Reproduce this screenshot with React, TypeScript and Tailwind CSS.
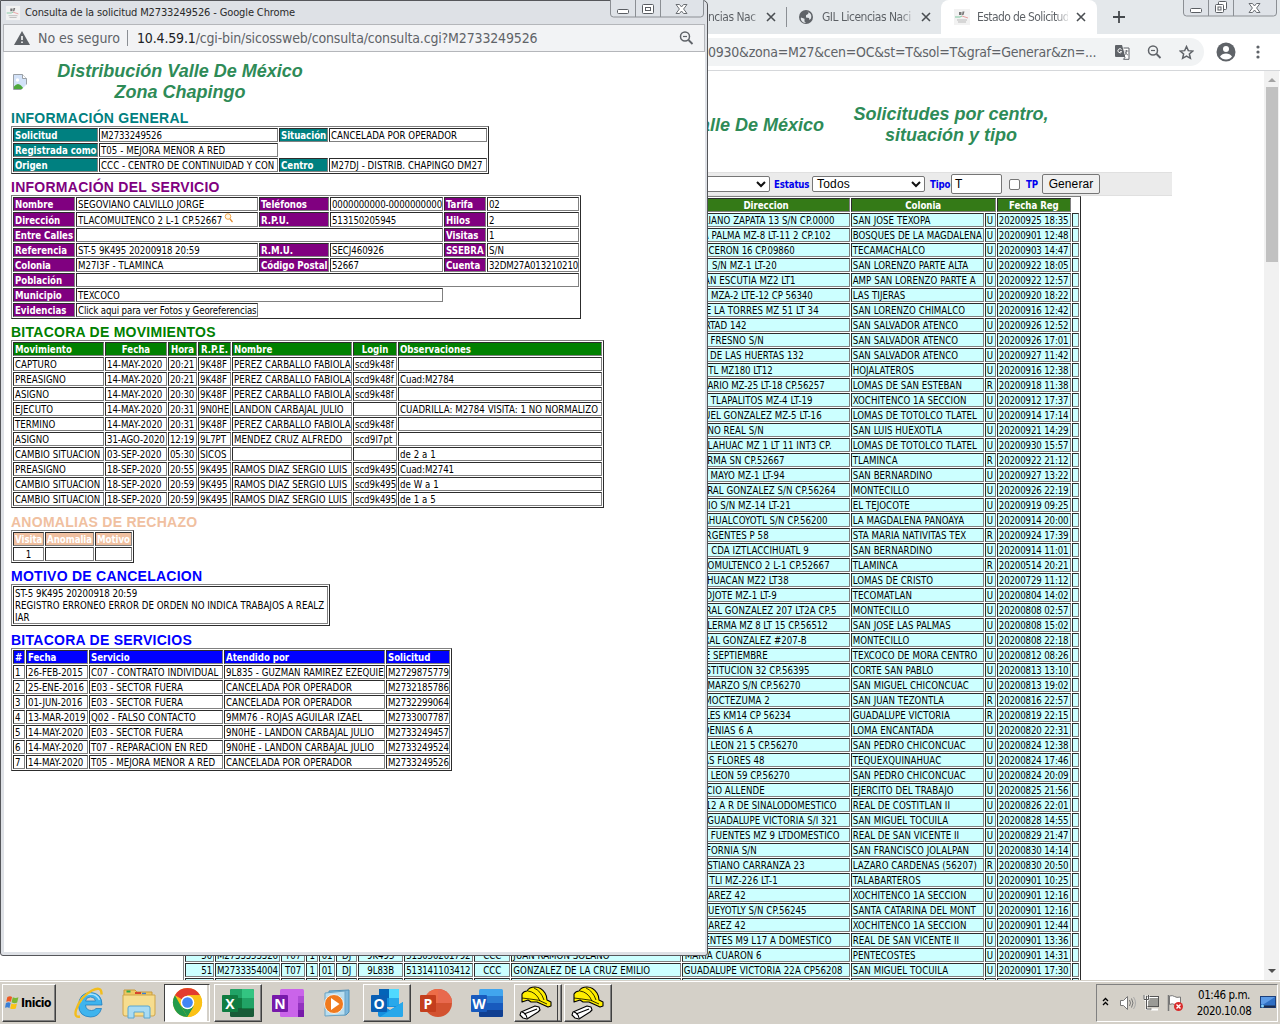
import React from 'react';

type Cell = {
  t?: React.ReactNode;
  head?: boolean;
  span?: number;
  center?: boolean;
  blank?: boolean;
};

const TAHOMA = "[font-family:'DejaVu_Sans_Condensed','Noto_Sans',sans-serif]";
const CELL =
  'border border-t-[#2c2c2c] border-l-[#2c2c2c] border-r-[#808080] border-b-[#808080] p-0 px-px whitespace-nowrap overflow-hidden align-middle';
const TABLE =
  'table-fixed border-separate border-spacing-px border border-t-[#808080] border-l-[#808080] border-r-[#2c2c2c] border-b-[#2c2c2c] text-[9.6px] leading-[12px] text-black bg-white';

function trackingFor(t: React.ReactNode): string {
  if (typeof t !== 'string' || t.length === 0) return 'tracking-[0.05px]';
  const digits = (t.match(/[0-9:.]/g) ?? []).length / t.length;
  if (digits > 0.8) return 'tracking-[-0.14px]';
  if (digits > 0.35) return 'tracking-[-0.06px]';
  return 'tracking-[0.05px]';
}

function Txt({ children, head = false }: { children?: React.ReactNode; head?: boolean }) {
  return <div className={`-mb-px pt-px ${head ? 'tracking-[-0.03px]' : trackingFor(children)}`}>{children}</div>;
}

function h(t: string, center = false): Cell {
  return { t, head: true, center };
}
function v(t: React.ReactNode = '', span = 1, center = false): Cell {
  return { t, span, center };
}

function DataTable({
  width,
  cols,
  rows,
  headClass,
}: {
  width: string;
  cols: string[];
  rows: Cell[][];
  headClass: string;
}) {
  return (
    <table className={`${TABLE} ${width}`}>
      <colgroup>
        {cols.map((c, i) => (
          <col key={i} className={c} />
        ))}
      </colgroup>
      <tbody>
        {rows.map((r, i) => (
          <tr key={i}>
            {r.map((c, j) =>
              c.blank ? (
                <td key={j} colSpan={c.span} className="h-[14px] p-0" />
              ) : (
                <td
                  key={j}
                  colSpan={c.span}
                  className={`${CELL} h-[14px] ${c.center ? 'text-center' : 'text-left'} ${
                    c.head ? `font-bold text-white ${headClass}` : ''
                  }`}
                >
                  {c.t ? <Txt head={c.head}>{c.t}</Txt> : null}
                </td>
              )
            )}
          </tr>
        ))}
      </tbody>
    </table>
  );
}

function Title({ children, className }: { children: string; className: string }) {
  return (
    <h2
      className={`h-[21px] pt-[5px] font-['Liberation_Sans'] text-[14px] leading-[16px] font-bold tracking-[0.260px] whitespace-nowrap ${className}`}
    >
      {children}
    </h2>
  );
}

const searchMini = (
  <svg className="inline-block" width="9" height="11" viewBox="0 0 9 11">
    <circle cx="4" cy="3.5" r="2.8" fill="#fff6e6" stroke="#f2a64a" strokeWidth="1" />
    <path d="M6 6 8.5 9" stroke="#e08a2c" strokeWidth="1.2" />
  </svg>
);

const general: Cell[][] = [
  [h('Solicitud'), v('M2733249526'), h('Situación'), v('CANCELADA POR OPERADOR')],
  [h('Registrada como'), v('T05 - MEJORA MENOR A RED'), { blank: true, span: 2 }],
  [h('Origen'), v('CCC - CENTRO DE CONTINUIDAD Y CON'), h('Centro'), v('M27DJ - DISTRIB. CHAPINGO DM27')],
];

const servicio: Cell[][] = [
  [h('Nombre'), v('SEGOVIANO CALVILLO JORGE'), h('Teléfonos'), v('0000000000-0000000000'), h('Tarifa'), v('02')],
  [
    h('Dirección'),
    v(
      <span className="-mt-px flex h-[14px] items-start">
        <span className="pt-[2px]">TLACOMULTENCO 2 L-1 CP.52667</span>
        <span className="ml-[2px] flex">{searchMini}</span>
      </span>
    ),
    h('R.P.U.'),
    v('513150205945'),
    h('Hilos'),
    v('2'),
  ],
  [h('Entre Calles'), v('', 3), h('Visitas'), v('1')],
  [h('Referencia'), v('ST-5 9K495 20200918 20:59'), h('R.M.U.'), v('SECJ460926'), h('SSEBRA'), v('S/N')],
  [h('Colonia'), v('M27I3F - TLAMINCA'), h('Código Postal'), v('52667'), h('Cuenta'), v('32DM27A013210210')],
  [h('Población'), v('', 5)],
  [h('Municipio'), v('TEXCOCO', 3), { blank: true, span: 2 }],
  [
    h('Evidencias'),
    v(<span className="tracking-[-0.1px]">Click aqui para ver Fotos y Georeferencias</span>),
    { blank: true, span: 4 },
  ],
];

const movimientos = [
  ['CAPTURO', '14-MAY-2020', '20:21', '9K48F', 'PEREZ CARBALLO FABIOLA', 'scd9k48f', ''],
  ['PREASIGNO', '14-MAY-2020', '20:21', '9K48F', 'PEREZ CARBALLO FABIOLA', 'scd9k48f', 'Cuad:M2784'],
  ['ASIGNO', '14-MAY-2020', '20:30', '9K48F', 'PEREZ CARBALLO FABIOLA', 'scd9k48f', ''],
  ['EJECUTO', '14-MAY-2020', '20:31', '9N0HE', 'LANDON CARBAJAL JULIO', '', 'CUADRILLA: M2784 VISITA: 1 NO NORMALIZO'],
  ['TERMINO', '14-MAY-2020', '20:31', '9K48F', 'PEREZ CARBALLO FABIOLA', 'scd9k48f', ''],
  ['ASIGNO', '31-AGO-2020', '12:19', '9L7PT', 'MENDEZ CRUZ ALFREDO', 'scd9l7pt', ''],
  ['CAMBIO SITUACION', '03-SEP-2020', '05:30', 'SICOS', '', '', 'de 2 a 1'],
  ['PREASIGNO', '18-SEP-2020', '20:55', '9K495', 'RAMOS DIAZ SERGIO LUIS', 'scd9k495', 'Cuad:M2741'],
  ['CAMBIO SITUACION', '18-SEP-2020', '20:59', '9K495', 'RAMOS DIAZ SERGIO LUIS', 'scd9k495', 'de W a 1'],
  ['CAMBIO SITUACION', '18-SEP-2020', '20:59', '9K495', 'RAMOS DIAZ SERGIO LUIS', 'scd9k495', 'de 1 a 5'],
];

const servicios = [
  ['1', '26-FEB-2015', 'C07 - CONTRATO INDIVIDUAL', '9L835 - GUZMAN RAMIREZ EZEQUIE', 'M2729875779'],
  ['2', '25-ENE-2016', 'E03 - SECTOR FUERA', 'CANCELADA POR OPERADOR', 'M2732185786'],
  ['3', '01-JUN-2016', 'E03 - SECTOR FUERA', 'CANCELADA POR OPERADOR', 'M2732299064'],
  ['4', '13-MAR-2019', 'Q02 - FALSO CONTACTO', '9MM76 - ROJAS AGUILAR IZAEL', 'M2733007787'],
  ['5', '14-MAY-2020', 'E03 - SECTOR FUERA', '9N0HE - LANDON CARBAJAL JULIO', 'M2733249457'],
  ['6', '14-MAY-2020', 'T07 - REPARACION EN RED', '9N0HE - LANDON CARBAJAL JULIO', 'M2733249524'],
  ['7', '14-MAY-2020', 'T05 - MEJORA MENOR A RED', 'CANCELADA POR OPERADOR', 'M2733249526'],
];

/* address, distance from the cell's right edge, colonia, type, date */
const solicitudes: [string, number, string, string, string][] = [
  ['EMILIANO ZAPATA 13 S/N CP.0000', 13, 'SAN JOSE TEXOPA', 'U', '20200925 18:35'],
  ['LA PALMA MZ-8 LT-11 2 CP.102', 17, 'BOSQUES DE LA MAGDALENA', 'U', '20200901 12:48'],
  ['CERON 16 CP.09860', 53, 'TECAMACHALCO', 'U', '20200903 14:47'],
  ['S/N MZ-1 LT-20', 71, 'SAN LORENZO PARTE ALTA', 'U', '20200922 18:05'],
  ['JUAN ESCUTIA MZ2 LT1', 52, 'AMP SAN LORENZO PARTE A', 'U', '20200922 12:57'],
  ['MZA-2 LTE-12 CP 56340', 35, 'LAS TIJERAS', 'U', '20200920 18:22'],
  ['DE LA TORRES MZ 51 LT 34', 29, 'SAN LORENZO CHIMALCO', 'U', '20200916 12:42'],
  ['LIBERTAD 142', 101, 'SAN SALVADOR ATENCO', 'U', '20200926 12:52'],
  ['FRESNO S/N', 84, 'SAN SALVADOR ATENCO', 'U', '20200926 17:01'],
  ['DE LAS HUERTAS 132', 44, 'SAN SALVADOR ATENCO', 'U', '20200927 11:42'],
  ['TL MZ180 LT12', 75, 'HOJALATEROS', 'U', '20200916 12:38'],
  ['ROSARIO MZ-25 LT-18 CP.56257', 23, 'LOMAS DE SAN ESTEBAN', 'R', '20200918 11:38'],
  ['TLAPALITOS MZ-4 LT-19', 35, 'XOCHITENCO 1A SECCION', 'U', '20200912 17:37'],
  ['MIGUEL GONZALEZ MZ-5 LT-16', 26, 'LOMAS DE TOTOLCO TLATEL', 'U', '20200914 17:14'],
  ['CAMINO REAL S/N', 84, 'SAN LUIS HUEXOTLA', 'U', '20200921 14:29'],
  ['TLAHUAC MZ 1 LT 11 INT3 CP.', 16, 'LOMAS DE TOTOLCO TLATEL', 'U', '20200930 15:57'],
  ['REFORMA SN CP.52667', 63, 'TLAMINCA', 'R', '20200922 21:12'],
  ['MAYO MZ-1 LT-94', 63, 'SAN BERNARDINO', 'U', '20200927 13:22'],
  ['CORRAL GONZALEZ S/N CP.56264', 12, 'MONTECILLO', 'U', '20200926 22:19'],
  ['RIO S/N MZ-14 LT-21', 57, 'EL TEJOCOTE', 'U', '20200919 09:25'],
  ['AHUALCOYOTL S/N CP.56200', 20, 'LA MAGDALENA PANOAYA', 'U', '20200914 20:00'],
  ['INSURGENTES P 58', 79, 'STA MARIA NATIVITAS TEX', 'R', '20200924 17:39'],
  ['CDA IZTLACCIHUATL 9', 39, 'SAN BERNARDINO', 'U', '20200914 11:01'],
  ['TLACOMULTENCO 2 L-1 CP.52667', 18, 'TLAMINCA', 'R', '20200514 20:21'],
  ['TEOTIHUACAN MZ2 LT38', 59, 'LOMAS DE CRISTO', 'U', '20200729 11:12'],
  ['OJOTE MZ-1 LT-9', 71, 'TECOMATLAN', 'U', '20200804 14:02'],
  ['CORRAL GONZALEZ 207 LT2A CP.5', 11, 'MONTECILLO', 'U', '20200808 02:57'],
  ['LERMA MZ 8 LT 15 CP.56512', 20, 'SAN JOSE LAS PALMAS', 'U', '20200808 15:02'],
  ['CORRAL GONZALEZ #207-B', 41, 'MONTECILLO', 'U', '20200808 22:18'],
  ['DE SEPTIEMBRE', 80, 'TEXCOCO DE MORA CENTRO', 'U', '20200812 08:26'],
  ['CONSTITUCION 32 CP.56395', 38, 'CORTE SAN PABLO', 'U', '20200813 13:10'],
  ['MARZO S/N CP.56270', 47, 'SAN MIGUEL CHICONCUAC', 'U', '20200813 19:02'],
  ['MOCTEZUMA 2', 78, 'SAN JUAN TEZONTLA', 'R', '20200816 22:57'],
  ['LES KM14 CP 56234', 57, 'GUADALUPE VICTORIA', 'R', '20200819 22:15'],
  ['GARDENIAS 6 A', 95, 'LOMA ENCANTADA', 'U', '20200820 22:31'],
  ['LEON 21 5 CP.56270', 50, 'SAN PEDRO CHICONCUAC', 'U', '20200824 12:38'],
  ['LAS FLORES 48', 83, 'TEQUEXQUINAHUAC', 'U', '20200824 17:46'],
  ['LEON 59 CP.56270', 58, 'SAN PEDRO CHICONCUAC', 'U', '20200824 20:09'],
  ['IGNACIO ALLENDE', 83, 'EJERCITO DEL TRABAJO', 'U', '20200825 21:56'],
  ['12 A R DE SINALODOMESTICO', 11, 'REAL DE COSTITLAN II', 'U', '20200826 22:01'],
  ['GUADALUPE VICTORIA S/I 321', 10, 'SAN MIGUEL TOCUILA', 'U', '20200828 14:55'],
  ['FUENTES MZ 9 LTDOMESTICO', 8, 'REAL DE SAN VICENTE II', 'U', '20200829 21:47'],
  ['CALIFORNIA S/N', 91, 'SAN FRANCISCO JOLALPAN', 'U', '20200830 14:14'],
  ['VENUSTIANO CARRANZA 23', 43, 'LAZARO CARDENAS (56207)', 'R', '20200830 20:50'],
  ['TLI MZ-226 LT-1', 70, 'TALABARTEROS', 'U', '20200901 10:25'],
  ['JUAREZ 42', 102, 'XOCHITENCO 1A SECCION', 'U', '20200901 12:16'],
  ['HUEYOTLY S/N CP.56245', 41, 'SANTA CATARINA DEL MONT', 'U', '20200901 12:16'],
  ['JUAREZ 42', 102, 'XOCHITENCO 1A SECCION', 'U', '20200901 12:44'],
  ['FUENTES M9 L17 A DOMESTICO', 16, 'REAL DE SAN VICENTE II', 'U', '20200901 13:36'],
  ['MARIA CUARON 6', 86, 'PENTECOSTES', 'U', '20200901 14:31'],
  ['GUADALUPE VICTORIA 22A CP56208', 5, 'SAN MIGUEL TOCUILA', 'U', '20200901 17:30'],
  ['', 0, '', '', ''],
];

const leftCells: Record<number, string[]> = {
  49: ['50', 'M2733353326', 'T07', '1', '01', 'DJ', '9K495', '513050201792', 'CCC', 'JUAN RAMON SOLANO'],
  50: ['51', 'M2733354004', 'T07', '1', '01', 'DJ', '9L83B', '513141103412', 'CCC', 'GONZALEZ DE LA CRUZ EMILIO'],
};
const emptyLeft = ['', '', '', '', '', '', '', '', '', ''];
const leftAlign = [
  'text-right',
  'text-left',
  'text-center',
  'text-center',
  'text-center',
  'text-center',
  'text-center',
  'text-left',
  'text-center',
  'text-left',
];
const backCols = [
  'w-[29px]',
  'w-[65px]',
  'w-[24px]',
  'w-[12px]',
  'w-[16px]',
  'w-[21px]',
  'w-[45px]',
  'w-[69px]',
  'w-[36px]',
  'w-[170px]',
  'w-[167px]',
  'w-[133px]',
  'w-[11px]',
  'w-[74px]',
  'w-[7px]',
];

function BackTable() {
  const hd = `${CELL} h-[14px] bg-[#347a17] text-center font-bold text-white`;
  const bd = `${CELL} h-[14px] bg-[#ccffff]`;
  return (
    <table className={`${TABLE} ml-[183px] w-[898px]`}>
      <colgroup>
        {backCols.map((c, i) => (
          <col key={i} className={c} />
        ))}
      </colgroup>
      <tbody>
        <tr>
          <td className={hd} colSpan={10} />
          <td className={hd}>
            <Txt head>Direccion</Txt>
          </td>
          <td className={hd} colSpan={2}>
            <Txt head>Colonia</Txt>
          </td>
          <td className={hd}>
            <Txt head>Fecha Reg</Txt>
          </td>
          <td className="p-0" />
        </tr>
        {solicitudes.map((s, i) => (
          <tr key={i}>
            {(leftCells[i] ?? emptyLeft).map((t, j) => (
              <td key={j} className={`${bd} ${leftAlign[j]}`}>
                {t ? <Txt>{t}</Txt> : null}
              </td>
            ))}
            <td className={bd}>
              <div className="flex justify-end" style={{ paddingRight: s[1] }}>
                {s[0] ? <Txt>{s[0]}</Txt> : null}
              </div>
            </td>
            {[s[2], s[3], s[4], ''].map((t, j) => (
              <td key={j} className={bd}>
                {t ? <Txt>{t}</Txt> : null}
              </td>
            ))}
          </tr>
        ))}
      </tbody>
    </table>
  );
}

function WindowButtons({ restore = false }: { restore?: boolean }) {
  return (
    <svg width="94" height="18" viewBox="0 0 94 18" fill="none" stroke="#8b8f94">
      <path d="M.5 0v14q0 3 3 3h87q3 0 3-3V0M25.5 0v17M50.5 0v17" fill="#dfe3e8" />
      <rect x="7.5" y="9.500" width="11" height="4" rx="1" fill="#fff" stroke="#5a5e63" />
      {restore ? (
        <g fill="#fff" stroke="#5a5e63">
          <rect x="35.500" y="2.500" width="8" height="8" rx="1" />
          <rect x="32.500" y="5.500" width="8" height="8" rx="1" />
          <rect x="35" y="8" width="3" height="3" />
        </g>
      ) : (
        <g fill="#fff" stroke="#5a5e63">
          <rect x="32.500" y="4.500" width="11" height="9" rx="1" />
          <rect x="35.500" y="7.500" width="5" height="3" />
        </g>
      )}
      <path
        d="M66 4.500h3.500l2 2.500 2-2.500H77L73.600 9l3.400 4.500h-3.500l-2-2.500-2 2.500H66L69.400 9z"
        fill="#fff"
        stroke="#6a6e73"
      />
    </svg>
  );
}

function ZoomOut() {
  return (
    <svg width="16" height="16" viewBox="0 0 16 16" fill="none" stroke="#5f6368" strokeWidth="1.500">
      <circle cx="6" cy="6.500" r="4.500" />
      <path d="M4 6.500h4" strokeWidth="1.200" />
      <path d="M9.500 10l4 4" strokeWidth="1.800" />
    </svg>
  );
}

function CfeIcon() {
  return (
    <svg width="16" height="16" viewBox="0 0 16 16">
      <rect width="16" height="16" fill="#f2f2f2" />
      <path d="M5 3h2.500v3H5zM8.500 2.500l2 0-1 3.500h-1.500z" fill="#777" />
      <path d="M1 8h5l2-1" stroke="#7fc7a0" fill="none" />
      <path d="M8 7l6 2" stroke="#e8a0a0" />
      <path d="M3 11h10M4 13h8" stroke="#bbb" />
    </svg>
  );
}

function Close() {
  return (
    <svg width="10" height="10" viewBox="0 0 10 10" stroke="#4a4e52" strokeWidth="1.600">
      <path d="M1 1l8 8M9 1L1 9" />
    </svg>
  );
}

const TAB_LABEL =
  'shrink-0 bg-gradient-to-r from-[#5a5e63] from-85% to-[#5f636833] bg-clip-text whitespace-nowrap text-transparent';

function BackBrowser() {
  return (
    <div className="flex h-[980px] flex-col bg-white">
      <div className="flex h-[34px] shrink-0 items-center bg-[#e4e8eb] pl-[708px] text-[12px] tracking-[-0.5px] text-[#5f6368]">
        <span className={`w-[50px] ${TAB_LABEL}`}>ncias Nac</span>
        <span className="ml-[8px] shrink-0">
          <Close />
        </span>
        <span className="ml-[10px] h-[20px] w-px shrink-0 bg-[#8b8f94]" />
        <svg className="ml-[12px] shrink-0" width="14" height="14" viewBox="0 0 14 14">
          <circle cx="7" cy="7" r="7" fill="#5f6368" />
          <path d="M2 7.500l3.500 1.200v2.800l1.500 1.500C3 13 1.200 9.500 2 7.500zM6 1.500l4 .500-1 2-2 1.200v2.300l3 .500.500 2 1.500-1.500c1.500-4-1.500-7-6-7z" fill="#e4e8eb" />
        </svg>
        <span className={`ml-[9px] w-[91px] ${TAB_LABEL}`}>GIL Licencias Naci</span>
        <span className="ml-[8px] shrink-0">
          <Close />
        </span>
        <div className="ml-[10px] flex h-[34px] w-[156px] shrink-0 items-center rounded-t-[8px] bg-white pl-[13px]">
          <CfeIcon />
          <span className={`ml-[7px] w-[91px] tracking-[-0.6px] ${TAB_LABEL}`}>Estado de Solicitud</span>
          <span className="ml-[8px]">
            <Close />
          </span>
        </div>
        <svg className="ml-[16px] shrink-0" width="12" height="12" viewBox="0 0 12 12" stroke="#45494d" strokeWidth="1.800">
          <path d="M6 0v12M0 6h12" />
        </svg>
        <span className="-mt-px ml-[58px] shrink-0 self-start">
          <WindowButtons restore />
        </span>
      </div>
      <div className="flex h-[37px] shrink-0 items-center border-b border-[#d5d7da] bg-white">
        <div className="flex h-[28px] w-[1204px] items-center rounded-r-full bg-[#f1f3f4] pl-[708px]">
          <span className="w-[398px] text-[14px] tracking-[-0.240px] whitespace-nowrap text-[#5f6368]">
            0930&amp;zona=M27&amp;cen=OC&amp;st=T&amp;sol=T&amp;graf=Generar&amp;zn=...
          </span>
          <svg className="ml-[9px] shrink-0" width="15" height="15" viewBox="0 0 15 15">
            <path d="M0 1q0-1 1-1h6l3.500 12H1q-1 0-1-1z" fill="#5f6368" />
            <path d="M8.500 3H14v11.300H8.500l1.800-2.300" fill="#fff" stroke="#5f6368" />
            <path d="M6.500 4.500a2 2 0 1 0 .2 2.200H5" fill="none" stroke="#fff" />
            <path d="M9.500 6h4M11.500 5v1q0 3-1.800 4M10 7q1 2.500 3 3" fill="none" stroke="#5f6368" strokeWidth=".8" />
          </svg>
          <span className="ml-[17px] shrink-0">
            <ZoomOut />
          </span>
          <svg className="ml-[16px] shrink-0" width="15" height="15" viewBox="0 0 24 24" fill="none" stroke="#5f6368" strokeWidth="2.400">
            <path d="M12 2.500l2.900 6.500 7 .700-5.300 4.600 1.600 7-6.200-3.700-6.200 3.700 1.600-7L2.100 9.700l7-.700z" />
          </svg>
        </div>
        <svg className="ml-[12px]" width="20" height="20" viewBox="0 0 20 20">
          <circle cx="10" cy="10" r="9.500" fill="#5f6368" />
          <circle cx="10" cy="7" r="3" fill="#fff" />
          <path d="M4 14.500q2-3 6-3t6 3q-2 3-6 3t-6-3z" fill="#fff" />
        </svg>
        <svg className="ml-[20px]" width="4" height="14" viewBox="0 0 4 14" fill="#5f6368">
          <circle cx="2" cy="2" r="1.600" />
          <circle cx="2" cy="7" r="1.600" />
          <circle cx="2" cy="12" r="1.600" />
        </svg>
      </div>
      <div className="flex h-[909px] shrink-0">
        <div className="w-[1264px] overflow-hidden">
          <div className="flex h-[101px] items-center pt-[7px] font-['Liberation_Sans'] text-[18px] leading-[21px] font-bold text-[#2e8b57] italic">
            <div className="w-[825px] pr-px text-right whitespace-nowrap">Distribución Valle De México</div>
            <div className="w-[252px] text-center whitespace-nowrap">
              Solicitudes por centro,
              <br />
              situación y tipo
            </div>
          </div>
          <div className="flex h-[24px] w-[1172px] items-center border-t border-b border-[#e0e0e0] bg-[#ebebeb] text-[9.6px] font-bold tracking-[-0.150px] text-[#0000ee]">
            <div className="ml-[600px] flex h-[16px] w-[170px] shrink-0 items-center justify-end rounded-[2px] border border-[#767676] bg-white pr-[3px]">
              <Chevron />
            </div>
            <span className="ml-[3px] w-[39px] shrink-0 pt-[2px] pl-px">Estatus</span>
            <div className="flex h-[16px] w-[113px] shrink-0 items-center justify-between rounded-[2px] border border-[#767676] bg-white pr-[3px] pl-[4px] font-['Liberation_Sans'] text-[12px] font-normal tracking-[0.2px] text-black">
              Todos
              <Chevron />
            </div>
            <span className="ml-[5px] w-[21px] shrink-0 pt-[2px]">Tipo</span>
            <div className="flex h-[20px] w-[51px] shrink-0 items-center rounded-[2px] border border-[#767676] bg-white pl-[3px] font-['Liberation_Sans'] text-[12px] font-normal text-black">
              T
            </div>
            <span className="ml-[7px] h-[11px] w-[11px] shrink-0 rounded-[2px] border border-[#767676] bg-white" />
            <span className="ml-[6px] w-[16px] shrink-0 pt-[3px]">TP</span>
            <div className="flex h-[20px] w-[58px] shrink-0 items-center justify-center rounded-[2px] border border-[#767676] bg-[#efefef] font-['Liberation_Sans'] text-[12px] font-normal tracking-[0.1px] text-black">
              Generar
            </div>
          </div>
          <BackTable />
        </div>
        <div className="flex w-[15px] flex-col items-center justify-between bg-[#f1f1f1]">
          <div className="flex flex-col items-center">
            <svg className="mt-[6px]" width="8" height="5" viewBox="0 0 8 5">
              <path d="M0 5l4-4 4 4z" fill="#a3a3a3" />
            </svg>
            <div className="mt-[5px] h-[175px] w-[12px] bg-[#c1c1c1]" />
          </div>
          <svg className="mb-[6px]" width="8" height="5" viewBox="0 0 8 5">
            <path d="M0 0l4 4 4-4z" fill="#505050" />
          </svg>
        </div>
      </div>
    </div>
  );
}

function Chevron() {
  return (
    <svg width="10" height="7" viewBox="0 0 10 7" fill="none" stroke="#111" strokeWidth="2">
      <path d="M1 1l4 4 4-4" />
    </svg>
  );
}

function FrontWindow() {
  return (
    <div className="absolute top-0 left-0 flex h-[956px] w-[708px] flex-col rounded-tr-[5px] rounded-b-[3px] border border-[#55565a] bg-[#dee1e6] px-[2px] pb-[3px]">
      <div className="flex h-[23px] shrink-0 items-center pl-[2px] text-[11px] tracking-[-0.130px] text-[#2a2a2a]">
        <span className="scale-90">
          <CfeIcon />
        </span>
        <span className="ml-[4px] flex-1 pt-px whitespace-nowrap">Consulta de la solicitud M2733249526 - Google Chrome</span>
        <span className="mr-px -mt-px self-start">
          <WindowButtons />
        </span>
      </div>
      <div className="flex h-[28px] shrink-0 items-center border border-[#b4b6ba] bg-[#f2f3f5] pl-[10px] text-[14px] text-[#5f6368]">
        <svg width="16" height="14" viewBox="0 0 16 14">
          <path d="M8 0l8 14H0z" fill="#5f6368" />
          <path d="M7.200 5h1.600v4H7.200zM7.200 10.500h1.600V12H7.200z" fill="#fff" />
        </svg>
        <span className="ml-[8px] w-[82px] tracking-[-0.040px] whitespace-nowrap">No es seguro</span>
        <span className="ml-[7px] h-[16px] w-px bg-[#8b8f94]" />
        <span className="ml-[9px] flex-1 tracking-[-0.160px] whitespace-nowrap">
          <span className="text-[#202124]">10.4.59.1</span>/cgi-bin/sicossweb/consulta/consulta.cgi?M2733249526
        </span>
        <span className="mr-[9px]">
          <ZoomOut />
        </span>
      </div>
      <div className="ml-px flex-1 overflow-hidden bg-white pl-[7px]">
        <div className="flex h-[53px] items-center pt-[6px]">
          <svg className="ml-[2px] shrink-0" width="14" height="16" viewBox="0 0 14 16">
            <path d="M.5.500h9l4 4v11H.500z" fill="#d3e2f8" stroke="#9aa0a6" />
            <path d="M9.500.500v4h4" fill="#fff" stroke="#9aa0a6" />
            <path d="M1 15v-2.500q3.500-4.500 7-1L11 15z" fill="#4ea83c" />
            <circle cx="4.500" cy="6" r="1.700" fill="#fff" />
            <path d="M8 16l6-6v6z" fill="#fff" />
          </svg>
          <div className="ml-[30px] w-[246px] text-center font-['Liberation_Sans'] text-[18px] leading-[21px] font-bold whitespace-nowrap text-[#2e8b57] italic">
            Distribución Valle De México
            <br />
            Zona Chapingo
          </div>
        </div>
        <Title className="text-[#008080]">INFORMACIÓN GENERAL</Title>
        <DataTable
          width="w-[478px]"
          cols={['w-[85px]', 'w-[179px]', 'w-[49px]', 'w-[158px]']}
          rows={general}
          headClass="bg-[#008080]"
        />
        <Title className="text-[#800080]">INFORMACIÓN DEL SERVICIO</Title>
        <DataTable
          width="w-[570px]"
          cols={['w-[62px]', 'w-[182px]', 'w-[70px]', 'w-[113px]', 'w-[42px]', 'w-[92px]']}
          rows={servicio}
          headClass="bg-[#800080]"
        />
        <Title className="text-[#008000]">BITACORA DE MOVIMIENTOS</Title>
        <DataTable
          width="w-[593px]"
          cols={['w-[91px]', 'w-[62px]', 'w-[29px]', 'w-[33px]', 'w-[120px]', 'w-[44px]', 'w-[204px]']}
          rows={[
            [h('Movimiento'), h('Fecha', true), h('Hora', true), h('R.P.E.', true), h('Nombre'), h('Login', true), h('Observaciones')],
            ...movimientos.map((r) => r.map((t) => v(t))),
          ]}
          headClass="bg-[#008000]"
        />
        <Title className="mt-px text-[#f0c0a0]">ANOMALIAS DE RECHAZO</Title>
        <DataTable
          width="w-[123px]"
          cols={['w-[31px]', 'w-[49px]', 'w-[37px]']}
          rows={[
            [h('Visita'), h('Anomalia'), h('Motivo')],
            [v('1', 1, true), v(), v()],
          ]}
          headClass="bg-[#f0c0a0]"
        />
        <Title className="text-[#0000ff]">MOTIVO DE CANCELACION</Title>
        <table className={`${TABLE} w-[319px]`}>
          <tbody>
            <tr>
              <td className={`${CELL} h-[38px]`}>
                <Txt>
                  <span className="tracking-[-0.040px]">ST-5 9K495 20200918 20:59</span>
                  <br />
                  REGISTRO ERRONEO ERROR DE ORDEN NO INDICA TRABAJOS A REALZ
                  <br />
                  IAR
                </Txt>
              </td>
            </tr>
          </tbody>
        </table>
        <Title className="mt-px text-[#0000ff]">BITACORA DE SERVICIOS</Title>
        <DataTable
          width="w-[441px]"
          cols={['w-[12px]', 'w-[62px]', 'w-[134px]', 'w-[161px]', 'w-[64px]']}
          rows={[
            [h('#'), h('Fecha'), h('Servicio'), h('Atendido por'), h('Solicitud')],
            ...servicios.map((r) => r.map((t) => v(t))),
          ]}
          headClass="bg-[#0000ff]"
        />
      </div>
    </div>
  );
}

function LetterTile({ letter, fill }: { letter: string; fill: string }) {
  return (
    <>
      <rect x="0" y="7" width="16" height="17" rx="1" fill={fill} />
      <text x="8" y="20.500" textAnchor="middle" fontFamily="Open Sans" fontWeight="700" fontSize="14" fill="#fff">
        {letter}
      </text>
    </>
  );
}

function Helmet() {
  return (
    <svg width="34" height="34" viewBox="0 0 34 34" stroke="#000" strokeWidth="1.100" strokeLinejoin="round">
      <path d="M2 26l14-6 4 1 1 3-2 2-11 7-4-1-3-3z" fill="#fff" />
      <path d="M5 28l13-5M3 26q4 1 5 6" fill="none" />
      <path d="M3 16V8q2-3 5-3 2-4 8-4 6 0 10 6 2 3 2 7l4 2v4l-3 1-11-5-6 0-3-2z" fill="#ffee00" />
      <path d="M9 5q8 1 12 10M15 2q7 3 10 12M3 12l8 1q9 0 17 5" fill="none" strokeWidth=".8" />
    </svg>
  );
}

const RAISED = 'border border-t-white border-l-white border-r-[#404040] border-b-[#404040] shadow-[inset_-1px_-1px_0_#808080]';

function Taskbar() {
  return (
    <div className="flex h-[44px] items-center border-t border-[#d4d0c8] bg-[#d4d0c8] pl-[2px] shadow-[inset_0_1px_0_#fff]">
      <div className={`flex h-[38px] w-[54px] items-center pl-[2px] text-[12px] font-bold tracking-[-0.5px] text-black ${RAISED}`}>
        <svg className="shrink-0" width="15" height="15" viewBox="0 0 16 16">
          <path d="M2.500 2q3-1.500 5 0L6.300 7.300q-2-1.500-5 0z" fill="#ee5a24" />
          <path d="M8.300 2.500q3 1.500 6 0L13 8q-3 1.500-6-.300z" fill="#7ab733" />
          <path d="M1 8.500q3-1.500 5 0L4.700 14q-2-1.500-4.700-.300z" fill="#3a7fd5" />
          <path d="M6.800 9q3 1.500 6 0l-1.300 5.300q-3 1.500-6 0z" fill="#fbc314" />
        </svg>
        <span className="ml-px">Inicio</span>
      </div>
      <svg className="ml-[18px]" width="32" height="32" viewBox="0 0 32 32" fill="none">
        <path d="M28 18H11.500q.5 5.500 6 5.500 3 0 4.500-2h5.500q-2.500 8.500-11 8.500Q5 29.500 4.500 18.500 5 6 16.500 5.500 28 6 28 18zM11.500 14h10q-.5-4-5-4t-5 4z" fill="#3fb4ee" stroke="#1f7fc0" strokeWidth=".8" />
        <path d="M6.500 15Q8 8 16 7q7 0 9.500 6" stroke="#a9e2fb" strokeWidth="1.300" />
        <path d="M6 29.500Q0 31 2 23 6 10 18 3.500q10-5 9.500 4" stroke="#f2bd1d" strokeWidth="2.400" />
      </svg>
      <svg className="ml-[16px]" width="34" height="32" viewBox="0 0 34 32">
        <path d="M2 3h11l2 2h15v5H2z" fill="#eec762" stroke="#c99b3b" />
        <path d="M4.500 4.500h4" stroke="#2da84a" strokeWidth="2" />
        <path d="M13 6h6" stroke="#d8452c" strokeWidth="2" />
        <path d="M20 6.500h4" stroke="#3a7fd5" strokeWidth="1.500" />
        <path d="M1 8h32v19q0 2-2 2H3q-2 0-2-2z" fill="#f6dd8f" stroke="#d0a548" />
        <path d="M6 31V21q0-2 2-2h18q2 0 2 2v10h-6v-6H12v6z" fill="#a9dbf3" stroke="#5aa6d0" />
      </svg>
      <div className="ml-[8px] flex h-[38px] w-[46px] items-center justify-center border border-t-[#404040] border-r-white border-b-white border-l-[#404040] bg-white shadow-[inset_-2px_0_0_#d4d0c8]">
        <svg width="31" height="31" viewBox="0 0 32 32">
          <circle cx="16" cy="16" r="15" fill="#fbc116" />
          <path d="M16 16L3 8.500A15 15 0 0 1 29 8.500H16z" fill="#e33b2e" />
          <path d="M3 8.500L9.500 20 16 31A15 15 0 0 1 3 8.500z" fill="#229a4b" />
          <path d="M16 31l6.500-11L9.500 20z" fill="#229a4b" />
          <path d="M29 8.500H16l6.500 11.500L16 31A15 15 0 0 0 29 8.500z" fill="#fbc116" />
          <circle cx="16" cy="16" r="7" fill="#fff" />
          <circle cx="16" cy="16" r="5.500" fill="#4285f4" />
        </svg>
      </div>
      <div className={`ml-[4px] flex h-[38px] w-[48px] items-center justify-center ${RAISED}`}>
        <svg width="33" height="30" viewBox="0 0 33 30">
          <rect x="8" y="1" width="24" height="28" rx="1.500" fill="#185c37" />
          <path d="M8 2.500Q8 1 9.500 1H20v9H8z" fill="#21a366" />
          <path d="M20 1h10.500Q32 1 32 2.500V10H20z" fill="#33c481" />
          <path d="M8 10h12v10H8z" fill="#107c41" />
          <path d="M20 10h12v10H20z" fill="#21a366" />
          <path d="M20 20h12v1H20z" fill="#107c41" />
          <LetterTile letter="X" fill="#107c41" />
        </svg>
      </div>
      <svg className="ml-[10px]" width="33" height="30" viewBox="0 0 33 30">
        <rect x="8" y="1" width="24" height="28" rx="1.500" fill="#ca64ea" />
        <path d="M26 8h6v7h-6z" fill="#ae4bd5" />
        <path d="M26 15h6v7h-6z" fill="#9332bf" />
        <path d="M26 22h6v7h-6z" fill="#7719aa" />
        <LetterTile letter="N" fill="#7719aa" />
      </svg>
      <svg className="ml-[18px]" width="30" height="30" viewBox="0 0 30 30">
        <path d="M6 3l20-1v22l-3 3H6z" fill="#7db7dc" stroke="#4e8fb8" />
        <path d="M2 5l20-2v24L2 28z" fill="#b9def0" stroke="#6aa3c4" />
        <circle cx="11" cy="16" r="9.500" fill="#f07a1e" stroke="#fff" strokeWidth=".8" />
        <path d="M8 10l8.500 6L8 22z" fill="#fff" />
      </svg>
      <div className={`ml-[10px] flex h-[38px] w-[48px] items-center justify-center ${RAISED}`}>
        <svg width="33" height="30" viewBox="0 0 33 30">
          <rect x="8" y="1" width="20" height="18" rx="1" fill="#1490df" />
          <path d="M18 1h10v9H18z" fill="#50d9ff" />
          <path d="M18 10h10v8H18z" fill="#28a8ea" />
          <path d="M8 1h10v9H8z" fill="#0364b8" />
          <path d="M7 15l12 7 13-8v13q0 2-2 2H9q-2 0-2-2z" fill="#1490df" />
          <path d="M32 14v13q0 2-2 2H9z" fill="#28a8ea" />
          <LetterTile letter="O" fill="#0a5fb4" />
        </svg>
      </div>
      <svg className="ml-[9px]" width="33" height="30" viewBox="0 0 33 30">
        <circle cx="18" cy="15" r="14" fill="#d35230" />
        <path d="M18 1a14 14 0 0 0-14 14h14z" fill="#ed6c47" />
        <path d="M18 1a14 14 0 0 1 14 14H18z" fill="#e8694e" />
        <LetterTile letter="P" fill="#c43e1c" />
      </svg>
      <svg className="ml-[18px]" width="33" height="30" viewBox="0 0 33 30">
        <rect x="8" y="1" width="24" height="28" rx="1.500" fill="#41a5ee" />
        <path d="M8 8h24v7H8z" fill="#2b7cd3" />
        <path d="M8 15h24v7H8z" fill="#185abd" />
        <path d="M8 22h24v5.500q0 1.500-1.500 1.500h-21Q8 29 8 27.500z" fill="#103f91" />
        <LetterTile letter="W" fill="#185abd" />
      </svg>
      <div className={`ml-[10px] flex h-[38px] w-[48px] ${RAISED}`}>
        <div className="flex h-[36px] w-[43px] items-center justify-center border-r border-[#404040]">
          <Helmet />
        </div>
      </div>
      <div className={`ml-[2px] flex h-[38px] w-[48px] items-center justify-center ${RAISED}`}>
        <Helmet />
      </div>
      <div className="mr-[2px] ml-auto flex h-[38px] w-[182px] items-center border border-t-[#808080] border-r-white border-b-white border-l-[#808080]">
        <svg className="-mt-[3px] ml-[5px]" width="7" height="9" viewBox="0 0 7 9" fill="none" stroke="#000" strokeWidth="1.300">
          <path d="M1 4l2.500-2.500L6 4M1 8l2.500-2.500L6 8" />
        </svg>
        <svg className="ml-[10px]" width="18" height="18" viewBox="0 0 18 18" fill="none" stroke="#777">
          <path d="M1.500 6.500h3l4-4v13l-4-4h-3z" fill="#fff" />
          <path d="M10.500 6q2 3 0 6M12.500 4.500q3 4.500 0 9" />
          <path d="M14.500 3q4 6 0 12" stroke="#aaa" />
        </svg>
        <svg className="ml-[6px]" width="17" height="17" viewBox="0 0 17 17" fill="none" stroke="#555">
          <rect x="4.500" y="3.500" width="11" height="9" fill="#9a9a96" stroke="#fff" />
          <rect x="3.500" y="2.500" width="12" height="10" />
          <path d="M8 15.500h7" stroke="#fff" strokeWidth="2" />
          <path d="M1.500 1v4q0 1 2 1t2-1V1M3.500 6v9h4" stroke="#fff" strokeWidth="2" />
          <path d="M1 1v4.500h4.500V1M3.500 6v9h5" />
        </svg>
        <svg className="ml-[7px]" width="17" height="18" viewBox="0 0 17 18">
          <path d="M1.500 1v16" stroke="#777" strokeWidth="1.500" />
          <path d="M2.500 2q3-1 5 .500t6 .500v8q-4 1-6-.500t-5 0z" fill="#fff" stroke="#777" />
          <circle cx="11.500" cy="12.500" r="4.500" fill="#d92b2b" />
          <path d="M9.500 10.500l4 4M13.500 10.500l-4 4" stroke="#fff" strokeWidth="1.400" />
        </svg>
        <div className="ml-[12px] flex h-[32px] w-[56px] flex-col items-center text-[11.5px] leading-[16px] tracking-[-0.450px] whitespace-nowrap text-black">
          <span>01:46 p.m.</span>
          <span>2020.10.08</span>
        </div>
        <svg className="ml-[8px]" width="16" height="13" viewBox="0 0 16 13">
          <rect x=".5" y=".5" width="15" height="11" fill="#2f6fc4" stroke="#1b3f7c" />
          <path d="M1 1h14L4 8H1z" fill="#5d9be6" />
          <path d="M1 9.500h14v2H1z" fill="#1c2c4c" />
          <circle cx="2.500" cy="10" r="1.500" fill="#7fd0ff" />
        </svg>
      </div>
    </div>
  );
}

export default function App() {
  return (
    <div className={`relative h-[1024px] w-[1280px] overflow-hidden bg-white ${TAHOMA}`}>
      <BackBrowser />
      <Taskbar />
      <FrontWindow />
    </div>
  );
}
